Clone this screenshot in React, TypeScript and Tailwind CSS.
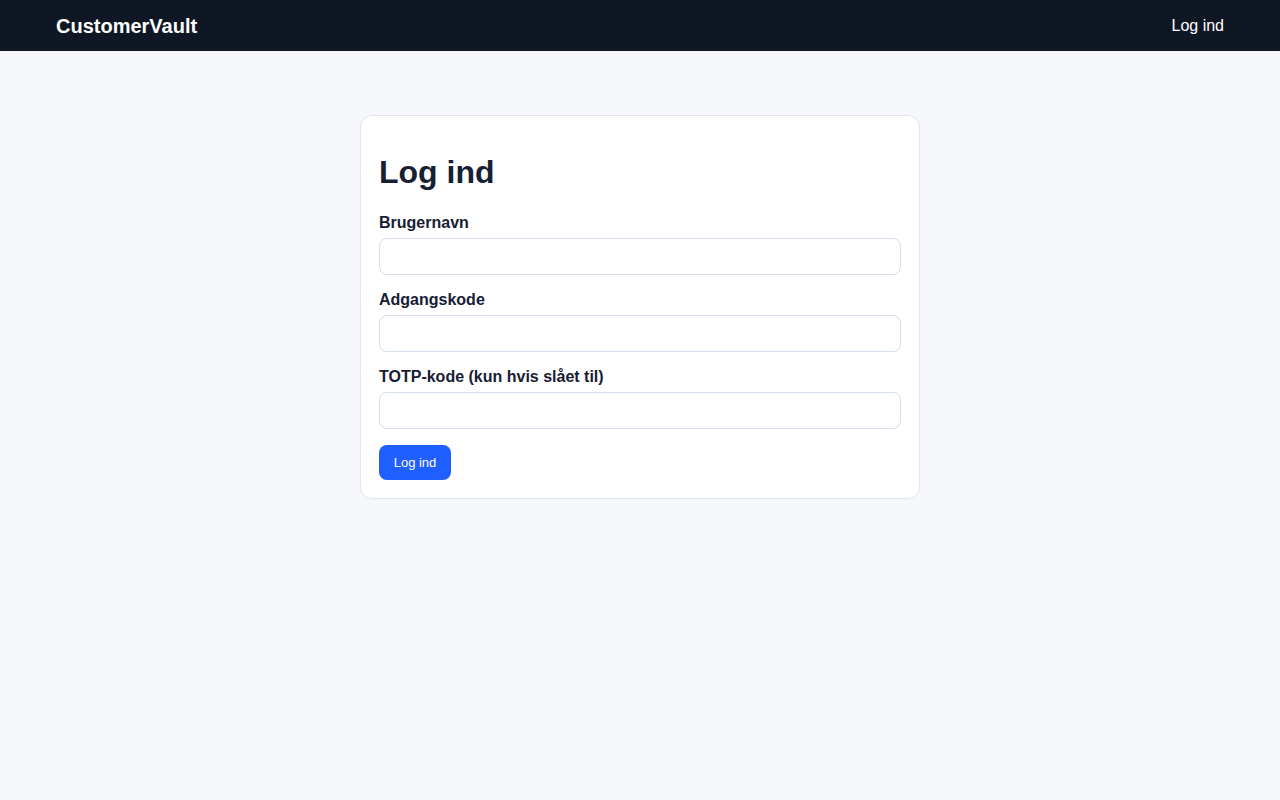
export default function App() {
  const fields = ["Brugernavn", "Adgangskode", "TOTP-kode (kun hvis slået til)"];

  return (
    <div className="min-h-screen bg-[#f5f7fa] font-['Liberation_Sans',Arial,sans-serif] text-[#172033]">
      <header className="h-[51px] bg-[#0f1624] flex items-center justify-between px-14">
        <span className="text-white text-[20px] font-bold">CustomerVault</span>
        <a className="text-white text-[16px]">Log ind</a>
      </header>

      <main className="flex justify-center pt-16">
        <div className="w-[560px] bg-white border border-[#dde4ee] rounded-xl p-[18px]">
          <h1 className="mt-[19px] mb-[19px] text-[32px] leading-[38px] font-bold text-[#172033]">Log ind</h1>
          <form className="flex flex-col gap-3" onSubmit={(e) => e.preventDefault()}>
            {fields.map((f, i) => (
              <label key={f} className="flex flex-col gap-[3px]">
                <span className="pt-px text-[16px] leading-6 font-bold">{f}</span>
                <input
                  type={i === 1 ? "password" : "text"}
                  className="h-[37px] w-full rounded-lg border border-[#d5dfeb] bg-white px-3 outline-none"
                />
              </label>
            ))}
            <div className="pt-1">
              <button className="h-[35px] w-[72px] rounded-lg bg-[#1f5eff] text-white text-[13px]">Log ind</button>
            </div>
          </form>
        </div>
      </main>
    </div>
  );
}
